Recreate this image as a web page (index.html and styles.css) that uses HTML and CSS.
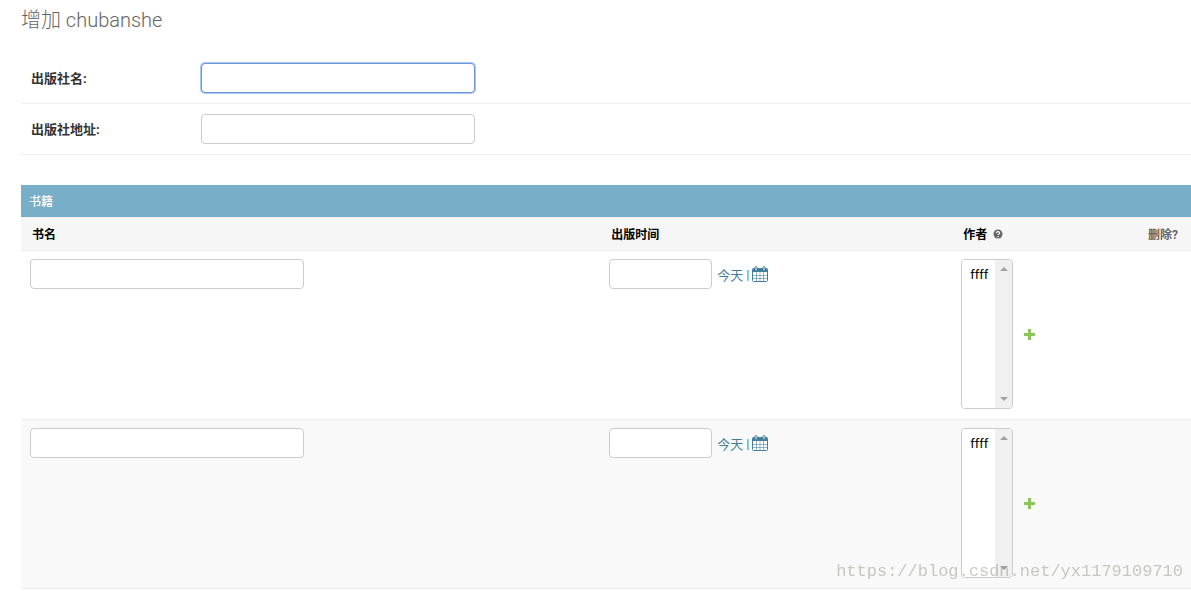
FILE: index.html
```
<!DOCTYPE html>
<html lang="zh-CN">
<head>
  <meta charset="utf-8">
  <meta name="viewport" content="width=device-width, initial-scale=1.0">
  <title>增加 chubanshe</title>
  <link rel="stylesheet" href="styles.css">
</head>
<body>
  <svg class="sprite" aria-hidden="true">
    <symbol id="icon-calendar" viewBox="0 0 16 16">
      <rect x="0.5" y="2.5" width="15" height="13" rx="1" fill="#fff" stroke="#447e9b"/>
      <path d="M1 2h14v4H1z" fill="#447e9b"/>
      <path d="M1 9.5h14M1 12.5h14M4.5 6v9M8 6v9M11.5 6v9" stroke="#447e9b" stroke-opacity=".55"/>
      <rect x="3" y="0.5" width="2" height="4" rx="1" fill="#fff" stroke="#447e9b"/>
      <rect x="11" y="0.5" width="2" height="4" rx="1" fill="#fff" stroke="#447e9b"/>
    </symbol>
    <symbol id="icon-add" viewBox="0 0 11 11">
      <path d="M4 0h3v4h4v3H7v4H4V7H0V4h4z" fill="#8ac656"/>
    </symbol>
    <symbol id="icon-help" viewBox="0 0 10 10">
      <circle cx="5" cy="5" r="4.5" fill="#666"/>
      <path d="M3.4 4.1c0-2 3.2-2 3.2-.2C6.6 5 5 4.900 5 6.100M5 7v1.200" fill="none" stroke="#fff" stroke-width="1.200"/>
    </symbol>
  </svg>

  <form class="content">
    <h1>增加 chubanshe</h1>

    <div class="module">
      <div class="form-row">
        <label for="id_name">出版社名:</label>
        <input type="text" id="id_name" class="text-field focused">
      </div>
      <div class="form-row">
        <label for="id_address">出版社地址:</label>
        <input type="text" id="id_address" class="text-field">
      </div>
    </div>

    <div class="inline-group">
      <h2>书籍</h2>
      <table>
        <thead>
          <tr>
            <th class="col-name">书名</th>
            <th class="col-date">出版时间</th>
            <th class="col-author">作者 <svg class="help"><use href="#icon-help"/></svg></th>
            <th class="col-delete">删除?</th>
          </tr>
        </thead>
        <tbody>
          <tr>
            <td><input type="text" class="text-field" aria-label="书名"></td>
            <td>
              <div class="date-cell">
                <input type="text" class="date-field" aria-label="出版时间">
                <span class="shortcuts"><a href="#">今天</a> | <a href="#" aria-label="日历"><svg class="calendar"><use href="#icon-calendar"/></svg></a></span>
              </div>
            </td>
            <td>
              <div class="author-cell">
                <div class="list-box">
                  <select multiple aria-label="作者"><option>ffff</option></select>
                  <span class="scrollbar"></span>
                </div>
                <a href="#" aria-label="增加作者"><svg class="add"><use href="#icon-add"/></svg></a>
              </div>
            </td>
            <td></td>
          </tr>
          <tr>
            <td><input type="text" class="text-field" aria-label="书名"></td>
            <td>
              <div class="date-cell">
                <input type="text" class="date-field" aria-label="出版时间">
                <span class="shortcuts"><a href="#">今天</a> | <a href="#" aria-label="日历"><svg class="calendar"><use href="#icon-calendar"/></svg></a></span>
              </div>
            </td>
            <td>
              <div class="author-cell">
                <div class="list-box">
                  <select multiple aria-label="作者"><option>ffff</option></select>
                  <span class="scrollbar"></span>
                </div>
                <a href="#" aria-label="增加作者"><svg class="add"><use href="#icon-add"/></svg></a>
              </div>
            </td>
            <td></td>
          </tr>
        </tbody>
      </table>
    </div>
  </form>
  <div class="watermark">https://blog.csdn.net/yx1179109710</div>
</body>
</html>
```
FILE: styles.css
```
* {
  box-sizing: border-box;
}

body {
  margin: 0;
  background: #fff;
  color: #333;
  font-family: Roboto, "Noto Sans CJK SC", sans-serif;
  font-size: 13px;
}

.sprite {
  position: absolute;
  width: 0;
  height: 0;
}

.content {
  padding: 8px 0 0 21px;
}

h1 {
  margin: 0 0 21px;
  font-size: 20px;
  font-weight: 300;
  line-height: 24px;
  color: #666;
}

.module {
  margin-bottom: 30px;
}

.form-row {
  display: flex;
  align-items: center;
  padding: 10px;
  border-bottom: 1px solid #eee;
}

.form-row label {
  width: 170px;
  padding-bottom: 2px;
  font-weight: bold;
}

input {
  height: 30px;
  padding: 5px 6px;
  border: 1px solid #ccc;
  border-radius: 4px;
  background: #fff;
  font: inherit;
}

.text-field {
  display: block;
  width: 274px;
}

.focused {
  border-color: #6d95d8;
  box-shadow: 0 0 0 1px #a5c7fa;
}

h2 {
  margin: 0;
  padding: 9px 8px 7px;
  background: #79aec8;
  color: #fff;
  font-size: 12px;
  font-weight: 500;
  line-height: 16px;
}

table {
  width: 100%;
  table-layout: fixed;
  border-collapse: separate;
  border-spacing: 0;
}

th {
  height: 34px;
  padding: 2px 11px 0;
  border-top: 1px solid #eee;
  border-bottom: 1px solid #eee;
  background: #f6f6f6;
  color: #000;
  font-size: 12px;
  font-weight: bold;
  line-height: 16px;
  text-align: left;
}

td {
  padding: 8px 9px 10px;
  border-bottom: 1px solid #eee;
  vertical-align: top;
}

tbody tr:nth-child(even) {
  background: #f9f9f9;
}

.col-name {
  width: 49.5%;
}

.col-date {
  width: 30.1%;
}

.col-author {
  width: 12%;
}

th.col-delete {
  padding-right: 13px;
  color: #666;
  text-align: right;
}

.help {
  width: 10px;
  height: 10px;
  margin-left: 3px;
}

.date-cell {
  display: flex;
  align-items: center;
  gap: 5px;
}

.date-field {
  width: 103px;
}

.shortcuts {
  display: flex;
  align-items: center;
  gap: 3px;
  color: #447e9b;
}

a {
  color: #447e9b;
  text-decoration: none;
}

.shortcuts svg,
.add {
  display: block;
}

.calendar {
  width: 16px;
  height: 16px;
}

.author-cell {
  display: flex;
  align-items: center;
  gap: 11px;
}

.list-box {
  display: flex;
  width: 52px;
  height: 150px;
  border: 1px solid #ccc;
  border-radius: 4px;
  background: #fff;
  overflow: hidden;
}

select {
  flex: 1;
  min-width: 0;
  padding: 7px 6px;
  border: 0;
  outline: 0;
  background: #fff;
  color: #000;
  font: inherit;
  overflow: hidden;
}

.scrollbar {
  display: flex;
  flex-direction: column;
  justify-content: space-between;
  align-items: center;
  width: 17px;
  padding: 7px 0;
  background: #f0f0f0;
}

.scrollbar::before,
.scrollbar::after {
  content: "";
  border: 4px solid transparent;
}

.scrollbar::before {
  border-top: 0;
  border-bottom-color: #a0a0a0;
}

.scrollbar::after {
  border-bottom: 0;
  border-top-color: #a0a0a0;
}

.add {
  width: 11px;
  height: 11px;
}

/* Sits over the last table row */
.watermark {
  position: fixed;
  right: 8px;
  bottom: 8px;
  color: rgba(150, 150, 140, 0.5);
  font-family: "Liberation Mono", monospace;
  font-size: 17px;
  line-height: 22px;
  pointer-events: none;
}
```
